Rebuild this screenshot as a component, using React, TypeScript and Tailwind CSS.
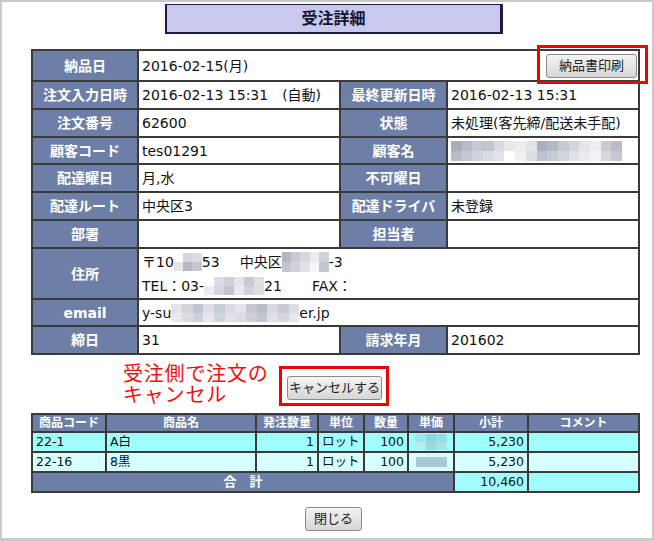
import React from "react";

type MosaicProps = {
    w: number;
    h: number;
    rows: string[][];
};

// pixelated blur blocks used to mask personal data
function Mosaic({ w, h, rows }: MosaicProps) {
    return (
        <span className="inline-flex flex-col align-middle" style={{ width: w, height: h }}>
            {rows.map((row, i) => (
                <span key={i} className="flex flex-1">
                    {row.map((c, j) => (
                        <span key={j} className="flex-1" style={{ backgroundColor: c }} />
                    ))}
                </span>
            ))}
        </span>
    );
}

const label =
    "bg-[#6d7fa7] text-white font-bold text-center text-[14px] leading-[18px] border-2 border-[#3a3a3a] p-0";
const value =
    "bg-white text-[#111] text-[14px] leading-[18px] border-2 border-[#3a3a3a] pl-[3px] py-0";

const th =
    "bg-[#6d7fa7] text-white font-bold text-center text-[12px] leading-[14px] border-2 border-[#3a3a3a] p-0";
const td = "text-[#111] text-[12.5px] leading-[14px] border-2 border-[#3a3a3a] px-[3px] py-0";

const customerName = [
    ["#a9adbb", "#b8bcc8", "#c4c8d2", "#c0c4ce", "#d8dae0", "#e6e7ea", "#eeeeef", "#e2e3e7", "#a9afc0", "#b3b8c6", "#c4c8d2", "#d4d6dd", "#e4e5e9", "#eeeef0", "#c8cad3", "#b9bcc8"],
    ["#b8bcc7", "#c6c9d2", "#d0d3da", "#dadce1", "#e2e3e7", "#ffffff", "#f0f0f2", "#dcdde2", "#bec2cc", "#c8cbd4", "#d2d4db", "#e0e1e6", "#eaebee", "#f2f2f4", "#d6d8de", "#c6c9d1"],
];

export default function App() {
    return (
        <div className="relative w-[654px] h-[541px] border-2 border-b-[3px] border-[#cacaca] bg-white font-['DejaVu_Sans','Noto_Sans_CJK_JP',sans-serif] overflow-hidden">
            <div className="mt-[2px] ml-[163px] w-[338px] h-[30px] bg-[#c9c9f0] border-t border-l-2 border-r-[3px] border-b-2 border-[#1c1c48] flex items-center justify-center text-[16px] font-bold text-[#141432]">
                受注詳細
            </div>

            <table className="mt-[15px] ml-[29px] w-[607px] table-fixed border-collapse border-2 border-[#8a8a8a]">
                <colgroup>
                    <col className="w-[106px]" />
                    <col className="w-[202px]" />
                    <col className="w-[107px]" />
                    <col className="w-[192px]" />
                </colgroup>
                <tbody>
                    <tr className="h-[31px]">
                        <td className={label}>納品日</td>
                        <td className={value} colSpan={3}>
                            <div className="flex items-center justify-between">
                                <span>2016-02-15(月)</span>
                                <button className="mr-[1px] w-[91px] h-[24px] text-[13px] text-[#222] border border-[#8a8a8a] rounded-[3px] bg-gradient-to-b from-[#f4f4f4] to-[#d6d6d6]">
                                    納品書印刷
                                </button>
                            </div>
                        </td>
                    </tr>
                    <tr className="h-[28px]">
                        <td className={label}>注文入力日時</td>
                        <td className={value}>2016-02-13 15:31　(自動)</td>
                        <td className={label}>最終更新日時</td>
                        <td className={value}>2016-02-13 15:31</td>
                    </tr>
                    <tr className="h-[28px]">
                        <td className={label}>注文番号</td>
                        <td className={value}>62600</td>
                        <td className={label}>状態</td>
                        <td className={value}>未処理(客先締/配送未手配)</td>
                    </tr>
                    <tr className="h-[27px]">
                        <td className={label}>顧客コード</td>
                        <td className={value}>tes01291</td>
                        <td className={label}>顧客名</td>
                        <td className={value}>
                            <div className="flex">
                                <Mosaic w={171} h={20} rows={customerName} />
                            </div>
                        </td>
                    </tr>
                    <tr className="h-[28px]">
                        <td className={label}>配達曜日</td>
                        <td className={value}>月,水</td>
                        <td className={label}>不可曜日</td>
                        <td className={value}></td>
                    </tr>
                    <tr className="h-[28px]">
                        <td className={label}>配達ルート</td>
                        <td className={value}>中央区3</td>
                        <td className={label}>配達ドライバ</td>
                        <td className={value}>未登録</td>
                    </tr>
                    <tr className="h-[28px]">
                        <td className={label}>部署</td>
                        <td className={value}></td>
                        <td className={label}>担当者</td>
                        <td className={value}></td>
                    </tr>
                    <tr className="h-[51px]">
                        <td className={label}>住所</td>
                        <td className={value} colSpan={3}>
                            <div className="leading-[24px] whitespace-nowrap">
                                <div className="flex items-center">
                                    <span>〒10</span>
                                    <Mosaic w={28} h={18} rows={[["#ffffff", "#d4d4dc", "#dcdce2"], ["#e6e6ea", "#b8b8c2", "#c6c6ce"]]} />
                                    <span>53</span>
                                    <span className="ml-[20px]">中央区</span>
                                    <Mosaic w={47} h={20} rows={[["#b4b6c2", "#c8cad2", "#d6d8de", "#ececef", "#d0d2da"], ["#c2c4ce", "#d0d2d9", "#e0e1e6", "#f6f6f8", "#c4c7d0"]]} />
                                    <span>-3</span>
                                </div>
                                <div className="flex items-center">
                                    <span>TEL：03-</span>
                                    <Mosaic w={60} h={18} rows={[["#ffffff", "#dcdce2", "#d0d0d8", "#e4e4e8", "#c8c8d0", "#e0e0e4"], ["#ececf0", "#d6d6dc", "#c4c4cc", "#eaeaee", "#d2d2da", "#dedee2"]]} />
                                    <span>21</span>
                                    <span className="ml-[30px]">FAX：</span>
                                </div>
                            </div>
                        </td>
                    </tr>
                    <tr className="h-[27px]">
                        <td className={label}>email</td>
                        <td className={value} colSpan={3}>
                            <div className="flex items-center whitespace-nowrap">
                                <span>y-su</span>
                                <Mosaic
                                    w={128}
                                    h={18}
                                    rows={[
                                        ["#e2e2e8", "#d2d4dc", "#c0c4d0", "#dcdee4", "#c8ccd6", "#d8dae2", "#e4e4ea", "#c4c8d2", "#b8bcc8", "#d6d8e0", "#c8cad4", "#dcdde4"],
                                        ["#eaeaee", "#dadce2", "#ccd0da", "#e6e6ec", "#d2d4dc", "#e2e2e8", "#dadce4", "#cccfd8", "#c2c6d0", "#e0e0e6", "#d4d6de", "#e8e8ec"],
                                    ]}
                                />
                                <span>er.jp</span>
                            </div>
                        </td>
                    </tr>
                    <tr className="h-[28px]">
                        <td className={label}>締日</td>
                        <td className={value}>31</td>
                        <td className={label}>請求年月</td>
                        <td className={value}>201602</td>
                    </tr>
                </tbody>
            </table>

            <div className="absolute left-[535px] top-[43px] w-[111px] h-[39px] border-[3px] border-[#f00000]" />

            <div className="mt-[7px] ml-[121px] h-[44px] flex items-start">
                <div className="w-[156px] text-[20px] leading-[22px] tracking-[0.8px] text-[#f01010] font-['Noto_Sans_CJK_JP',sans-serif]">
                    <div className="h-[21px]">受注側で注文の</div>
                    <div>キャンセル</div>
                </div>
                <div className="mt-[4px] w-[110px] h-[40px] border-[3px] border-[#f00000] pl-[5px] pt-[6px]">
                    <button className="w-[95px] h-[24px] text-[13px] text-[#222] border border-[#8a8a8a] rounded-[3px] bg-gradient-to-b from-[#f4f4f4] to-[#d6d6d6]">
                        キャンセルする
                    </button>
                </div>
            </div>

            <table className="mt-[7px] ml-[29px] w-[607px] table-fixed border-collapse border-2 border-[#3a3a3a]">
                <colgroup>
                    <col className="w-[74px]" />
                    <col className="w-[150px]" />
                    <col className="w-[62px]" />
                    <col className="w-[46px]" />
                    <col className="w-[44px]" />
                    <col className="w-[46px]" />
                    <col className="w-[74px]" />
                    <col className="w-[111px]" />
                </colgroup>
                <thead>
                    <tr className="h-[18px]">
                        <th className={th}>商品コード</th>
                        <th className={th}>商品名</th>
                        <th className={th}>発注数量</th>
                        <th className={th}>単位</th>
                        <th className={th}>数量</th>
                        <th className={th}>単価</th>
                        <th className={th}>小計</th>
                        <th className={th}>コメント</th>
                    </tr>
                </thead>
                <tbody>
                    <tr className="h-[20px] bg-[#a0fdfd]">
                        <td className={td}>22-1</td>
                        <td className={td}>A白</td>
                        <td className={`${td} text-right`}>1</td>
                        <td className={td}>ロット</td>
                        <td className={`${td} text-right`}>100</td>
                        <td className={`${td} text-center`}>
                            <div className="flex justify-center">
                                <Mosaic w={32} h={16} rows={[["#a0e4ea", "#8fd6dc", "#96dce2"], ["#b2eef0", "#9ad8de", "#a6e2e6"]]} />
                            </div>
                        </td>
                        <td className={`${td} text-right`}>5,230</td>
                        <td className={td}></td>
                    </tr>
                    <tr className="h-[20px] bg-[#d6ffff]">
                        <td className={td}>22-16</td>
                        <td className={td}>8黒</td>
                        <td className={`${td} text-right`}>1</td>
                        <td className={td}>ロット</td>
                        <td className={`${td} text-right`}>100</td>
                        <td className={`${td} text-center`}>
                            <div className="flex justify-center">
                                <Mosaic w={31} h={10} rows={[["#a8c9d1"]]} />
                            </div>
                        </td>
                        <td className={`${td} text-right`}>5,230</td>
                        <td className={td}></td>
                    </tr>
                    <tr className="h-[20px]">
                        <td className={`${th} text-[13px]`} colSpan={6}>
                            合　計
                        </td>
                        <td className={`${td} text-right bg-[#a0fdfd]`}>10,460</td>
                        <td className={`${td} bg-[#a0fdfd]`}></td>
                    </tr>
                </tbody>
            </table>

            <div className="mt-[13px] ml-[303px]">
                <button className="w-[57px] h-[24px] text-[13px] text-[#222] border border-[#8a8a8a] rounded-[3px] bg-gradient-to-b from-[#f4f4f4] to-[#d6d6d6]">
                    閉じる
                </button>
            </div>
        </div>
    );
}
